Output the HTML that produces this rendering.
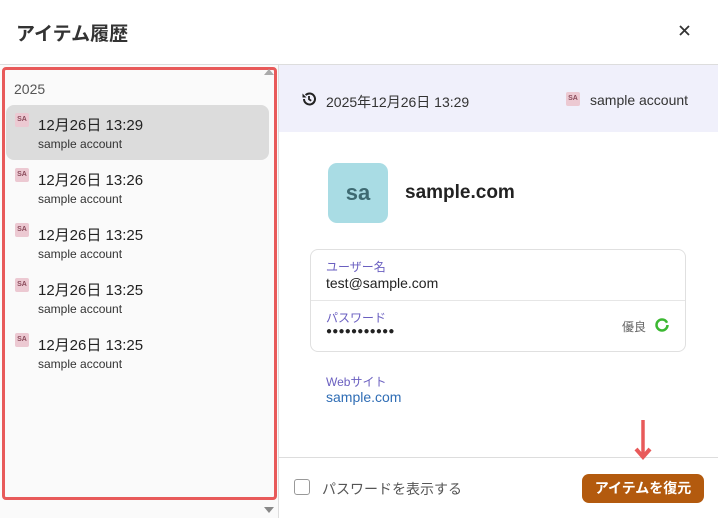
<!DOCTYPE html>
<html><head><meta charset="utf-8"><style>
*{box-sizing:border-box;margin:0;padding:0}
body{width:718px;height:518px;background:#fff;font-family:"Liberation Sans","Noto Sans CJK JP",sans-serif;position:relative;overflow:hidden;color:#222}
.abs{position:absolute}
.sa{position:absolute;width:14px;height:14px;background:#ecc9d2;border-radius:2px;font-size:7px;color:#8a4a5a;text-align:center;line-height:14px;font-weight:bold}
.item{position:absolute;left:6px;width:263px;height:55px}
.item .t{position:absolute;left:32px;top:9px;font-size:15px;color:#222}
.item .s{position:absolute;left:32px;top:32px;font-size:12px;color:#333}
.item .sa{left:9px;top:8px}
.lbl{font-size:12px;color:#6a5fc0}
</style></head><body>
<div class="abs" style="left:16px;top:19px;font-size:19px;font-weight:bold;color:#333">アイテム履歴</div>
<svg class="abs" style="left:679px;top:25px" width="11" height="11"><path d="M1 1l9 9M10 1l-9 9" stroke="#333" stroke-width="1.8"/></svg>
<div class="abs" style="left:0;top:64px;width:718px;height:1px;background:#ddd"></div>
<div class="abs" style="left:0;top:65px;width:278px;height:453px;background:#fafafa"></div>
<div class="abs" style="left:278px;top:65px;width:1px;height:453px;background:#ddd"></div>
<div class="abs" style="left:2px;top:67px;width:275px;height:433px;border:3px solid #e85a5a;border-radius:4px"></div>
<div class="abs" style="left:264px;top:69px;width:0;height:0;border-left:5px solid transparent;border-right:5px solid transparent;border-bottom:6px solid #aaa"></div>
<div class="abs" style="left:264px;top:507px;width:0;height:0;border-left:5px solid transparent;border-right:5px solid transparent;border-top:6px solid #888"></div>
<div class="abs" style="left:14px;top:81px;font-size:14px;color:#555">2025</div>
<div class="item" style="top:105px;background:#dcdcdc;border-radius:8px"><div class="sa">SA</div><div class="t">12月26日 13:29</div><div class="s">sample account</div></div>
<div class="item" style="top:160px"><div class="sa">SA</div><div class="t">12月26日 13:26</div><div class="s">sample account</div></div>
<div class="item" style="top:215px"><div class="sa">SA</div><div class="t">12月26日 13:25</div><div class="s">sample account</div></div>
<div class="item" style="top:270px"><div class="sa">SA</div><div class="t">12月26日 13:25</div><div class="s">sample account</div></div>
<div class="item" style="top:325px"><div class="sa">SA</div><div class="t">12月26日 13:25</div><div class="s">sample account</div></div>

<div class="abs" style="left:279px;top:65px;width:439px;height:67px;background:#f0f0fb"></div>
<svg class="abs" style="left:301px;top:91px" width="16" height="16" viewBox="0 0 16 16"><path d="M3 8a5.5 5.5 0 1 0 1.6-3.9" fill="none" stroke="#222" stroke-width="2"/><path d="M1.5 2.5v4h4z" fill="#222"/><path d="M8 5v3.3l2.2 1.5" fill="none" stroke="#222" stroke-width="1.8"/></svg>
<div class="abs" style="left:326px;top:92px;font-size:14px;color:#333">2025年12月26日 13:29</div>
<div class="sa" style="left:566px;top:92px">SA</div>
<div class="abs" style="left:590px;top:92px;font-size:14px;color:#333">sample account</div>

<div class="abs" style="left:328px;top:163px;width:60px;height:60px;background:#a9dce4;border-radius:9px;text-align:center;line-height:60px;font-size:22px;font-weight:bold;color:#3e6a72">sa</div>
<div class="abs" style="left:405px;top:182px;font-size:19px;font-weight:bold;color:#222">sample.com</div>

<div class="abs" style="left:310px;top:249px;width:376px;height:103px;border:1px solid #e0e0e0;border-radius:8px"></div>
<div class="abs" style="left:311px;top:300px;width:374px;height:1px;background:#e6e6e6"></div>
<div class="abs lbl" style="left:326px;top:258px">ユーザー名</div>
<div class="abs" style="left:326px;top:275px;font-size:14px">test@sample.com</div>
<div class="abs lbl" style="left:326px;top:309px">パスワード</div>
<div class="abs" style="left:326px;top:326px;font-size:10px;letter-spacing:0.2px;color:#222">●●●●●●●●●●●</div>
<div class="abs" style="left:622px;top:318px;font-size:12px;color:#666">優良</div>
<svg class="abs" style="left:654px;top:317px" width="16" height="16"><circle cx="8" cy="8" r="5.5" fill="none" stroke="#3cb832" stroke-width="2.5" stroke-dasharray="32 3"/></svg>
<div class="abs lbl" style="left:326px;top:373px">Webサイト</div>
<div class="abs" style="left:326px;top:389px;font-size:14px;color:#2f6db5">sample.com</div>

<div class="abs" style="left:279px;top:457px;width:439px;height:1px;background:#ddd"></div>
<div class="abs" style="left:294px;top:479px;width:16px;height:16px;border:1.5px solid #999;border-radius:3px"></div>
<div class="abs" style="left:322px;top:479px;font-size:14px;color:#555">パスワードを表示する</div>
<div class="abs" style="left:582px;top:474px;width:122px;height:29px;background:#b35a0e;border-radius:7px;color:#fff;font-size:14px;font-weight:bold;text-align:center;line-height:29px">アイテムを復元</div>
<svg class="abs" style="left:633px;top:418px" width="20" height="44"><path d="M10 2v36" stroke="#e85a5a" stroke-width="3.5"/><path d="M3 31l7 8 7-8" fill="none" stroke="#e85a5a" stroke-width="4"/></svg>
</body></html>
